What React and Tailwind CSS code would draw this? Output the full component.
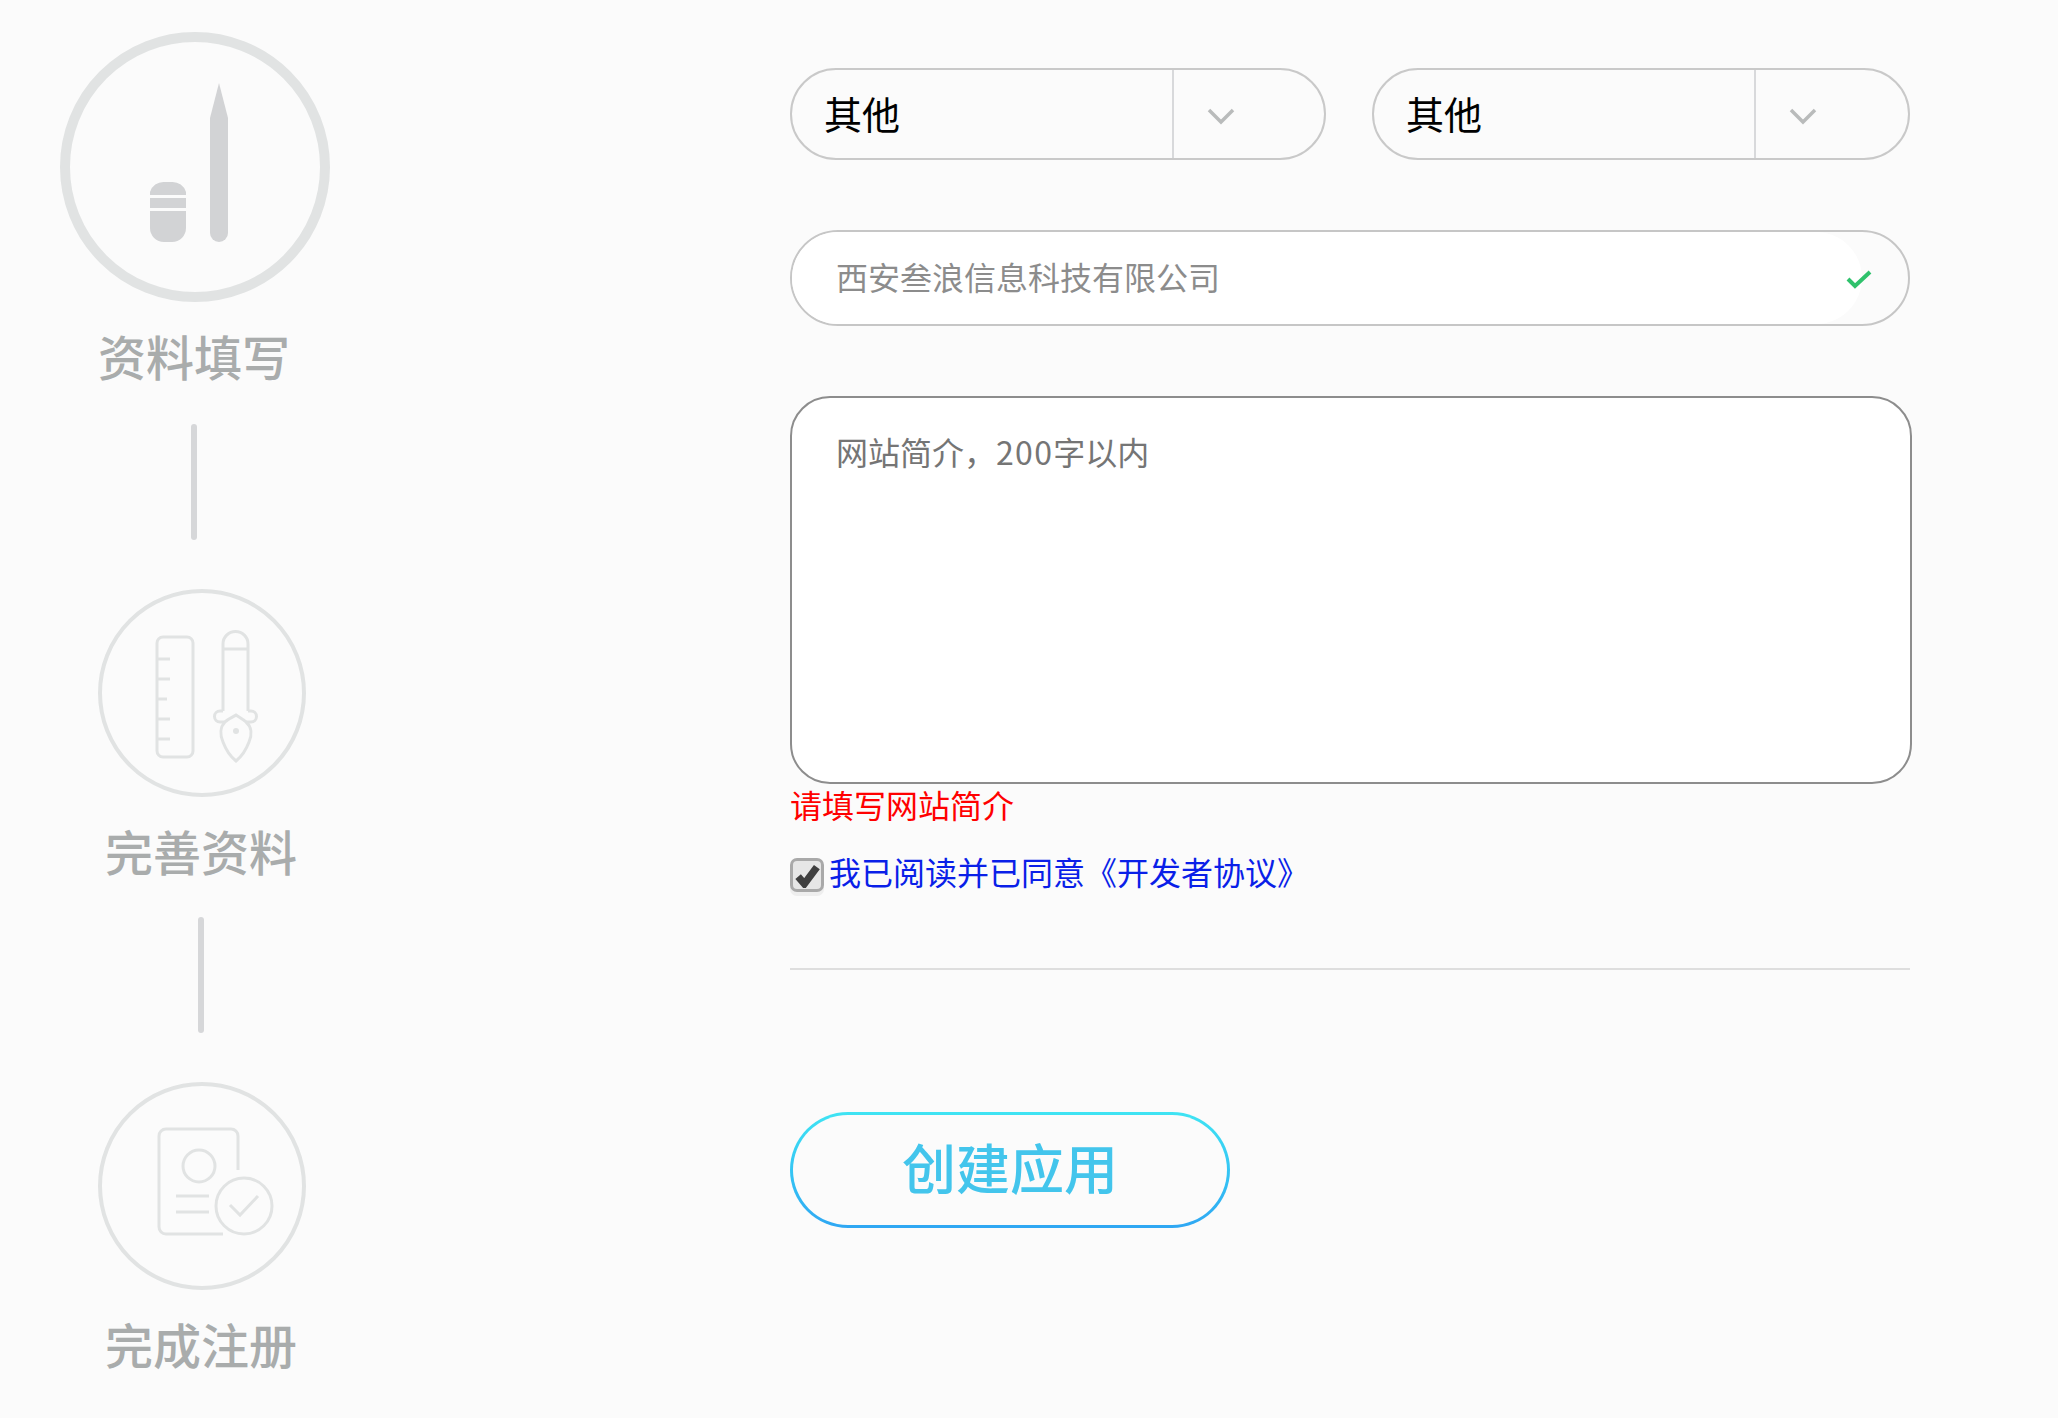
import React from 'react';

const stepStroke = '#e1e3e3';

const WriteIcon = () => (
  <svg viewBox="0 0 270 270" className="h-full w-full">
    <path d="M90 160 V163 H126 V160 A14 14 0 0 0 112 150 H104 A14 14 0 0 0 90 160 Z" fill="#d2d3d5" />
    <rect x="90" y="166" width="36" height="10" fill="#d2d3d5" />
    <path d="M90 179 H126 V196 A14 14 0 0 1 112 210 H104 A14 14 0 0 1 90 196 Z" fill="#d2d3d5" />
    <path d="M159 51 L168 86 V201 A9 9 0 0 1 150 201 V86 Z" fill="#d2d3d5" />
  </svg>
);

const RulerPenIcon = () => (
  <svg viewBox="0 0 208 208" className="h-full w-full" fill="none" stroke={stepStroke} strokeWidth="3">
    <rect x="59" y="48" width="36" height="120" rx="6" />
    <path d="M59 70 H72 M59 90 H72 M59 110 H69 M59 130 H72 M59 150 H72" />
    <path d="M125 122 V55 A12.5 12.5 0 0 1 150 55 V122" />
    <path d="M125 60 H150" />
    <path d="M125 122 H122 A5.5 5.5 0 0 0 122 133 H127 M150 122 H153 A5.5 5.5 0 0 1 153 133 H148" />
    <path d="M127 133 C122 138 122 146 125 153 C128 161 133 168 138 172 C143 168 148 161 151 153 C154 146 154 138 148 133 C145 130 141 128 138 126 C135 128 130 130 127 133 Z" />
    <circle cx="138" cy="142" r="3" fill={stepStroke} stroke="none" />
  </svg>
);

const DoneIcon = () => (
  <svg viewBox="0 0 208 208" className="h-full w-full" fill="none" stroke={stepStroke} strokeWidth="3">
    <path d="M140 88 V54 A7 7 0 0 0 133 47 H68 A7 7 0 0 0 61 54 V145 A7 7 0 0 0 68 152 H125" />
    <circle cx="101" cy="84" r="16" />
    <path d="M78 114 H111 M78 130 H111" />
    <circle cx="146" cy="124" r="28" />
    <path d="M132 123 L142 133 L160 114" />
  </svg>
);

const Step = ({ icon, label, active }) => (
  <div className={`flex flex-col items-center ${active ? 'mr-[14px]' : ''}`}>
    <div
      className={`ml-[2px] rounded-full border-[#e1e3e3] ${active ? 'h-[270px] w-[270px] border-[10px]' : 'h-[208px] w-[208px] border-[4px]'}`}
    >
      <div className={active ? '-m-[10px] h-[270px] w-[270px]' : '-m-[4px] h-[208px] w-[208px]'}>{icon}</div>
    </div>
    <div className="mt-[24px] h-[64px] text-[48px] font-medium leading-[58px] text-[#a9acac]">{label}</div>
  </div>
);

const Connector = ({ className }) => (
  <div className={`mb-[49px] h-[116px] w-[6px] rounded-[3px] bg-[#d6d7d9] ${className}`} />
);

const Select = ({ className, arrowClass }) => (
  <div className={`flex h-[92px] rounded-full border-2 border-[#c9c9c9] ${className}`}>
    <div className="flex-1 pl-[32px] text-[38px] leading-[86px] text-black">其他</div>
    <div className={`flex border-l-2 border-[#d8d9db] ${arrowClass}`}>
      <svg viewBox="0 0 28 18" className="mt-[37px] h-[18px] w-[28px]" fill="none" stroke="#b9bbbb" strokeWidth="3.5">
        <path d="M2 3 L14 15 L26 3" />
      </svg>
    </div>
  </div>
);

const App = () => {
  return (
    <div className="flex h-[1418px] overflow-hidden bg-[#fbfbfb] [font-family:'Noto_Sans_CJK_SC',sans-serif]">
      <div className="w-[790px] shrink-0">
        <div className="flex w-[402px] flex-col items-center pt-[32px]">
          <Step icon={<WriteIcon />} label="资料填写" active />
          <Connector className="mr-[14px] mt-[34px]" />
          <Step icon={<RulerPenIcon />} label="完善资料" />
          <Connector className="mt-[32px]" />
          <Step icon={<DoneIcon />} label="完成注册" />
        </div>
      </div>

      <div className="flex w-[1120px] flex-col pt-[68px]">
        <div className="flex gap-[46px]">
          <Select className="w-[536px]" arrowClass="w-[152px] pl-[33px]" />
          <Select className="w-[538px]" arrowClass="w-[154px] pl-[33px]" />
        </div>

        <div className="mt-[70px] flex h-[96px] rounded-full border-2 border-[#c6c6c6]">
          <div className="relative mr-[46px] flex-1 rounded-full bg-white pl-[44px] text-[32px] leading-[89px] text-[#8c8c8c]">
            西安叁浪信息科技有限公司
            <svg viewBox="0 0 26 20" className="absolute right-[-10px] top-[38px] h-[20px] w-[26px]" fill="none" stroke="#2fc26c" strokeWidth="4">
              <path d="M2 9 L9 16 L24 2" />
            </svg>
          </div>
        </div>

        <div className="mt-[70px] h-[388px] w-[1122px] rounded-[40px] border-2 border-[#8d8d8d] bg-white px-[44px] pt-[29px] text-[32px] leading-[48px] text-[#757575]">
          网站简介，<span className="tracking-[1.3px]">200</span>字以内
        </div>

        <div className="h-[44px] text-[32px] leading-[41px] text-[#ff0000]">请填写网站简介</div>

        <div className="mt-[30px] flex h-[34px] items-center gap-[5px]">
          <div className="flex h-[34px] w-[34px] shrink-0 items-center justify-center rounded-[7px] border-[3px] border-[#a9a9a9] bg-[#e6e6e6] shadow-[0_4px_0_#eeeeee]">
            <svg viewBox="0 0 24 24" className="h-[25px] w-[25px]" fill="none" stroke="#3f3f3f" strokeWidth="7">
              <path d="M3 13 L9 20 L21 4" />
            </svg>
          </div>
          <span className="pb-[8px] text-[32px] leading-[34px] text-[#0a1fe8]">我已阅读并已同意《开发者协议》</span>
        </div>

        <div className="mt-[76px] h-[2px] bg-[#dedede]" />

        <div className="mt-[142px] h-[116px] w-[440px] rounded-full bg-linear-to-b from-[#3fe4f3] to-[#2fa7f3] p-[3px]">
          <div className="h-full rounded-full bg-[#fbfbfb] text-center text-[54px] font-medium leading-[104px] text-[#43c5ec]">
            创建应用
          </div>
        </div>
      </div>
    </div>
  );
};

export default App;
